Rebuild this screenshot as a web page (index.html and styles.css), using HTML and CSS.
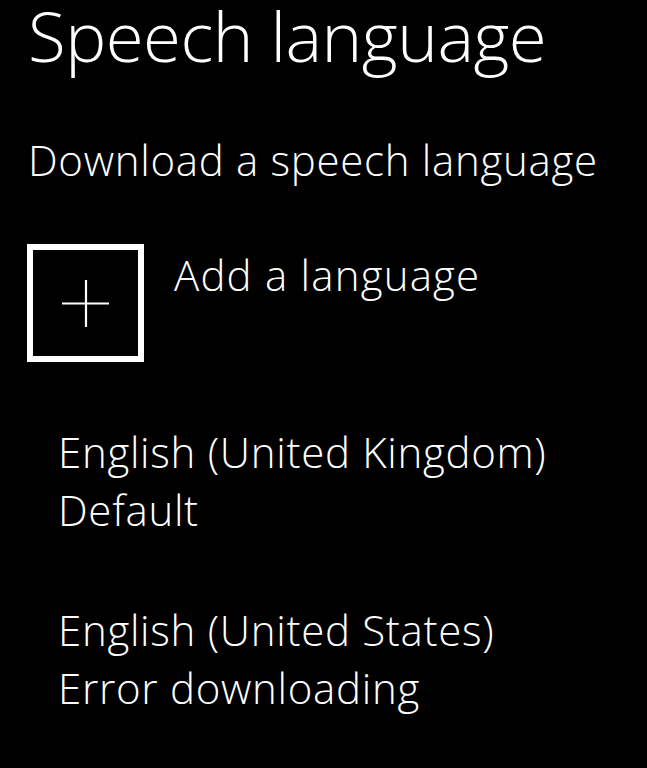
FILE: index.html
```html
<!DOCTYPE html>
<html lang="en">
<head>
<meta charset="utf-8">
<title>Speech language</title>
<link rel="stylesheet" href="styles.css">
</head>
<body>
<main class="page">
  <h1 class="title">Speech language</h1>
  <h2 class="subheader">Download a speech language</h2>
  <div class="add-row">
    <div class="add-tile">
      <svg class="plus" width="48" height="48" viewBox="0 0 48 48" aria-hidden="true">
        <path d="M24 1V48M0 24.5H47" stroke="#fff" stroke-width="2.2" fill="none"/>
      </svg>
    </div>
    <div class="add-label">Add a language</div>
  </div>
  <ul class="lang-list">
    <li class="lang-item">
      <div class="lang-name">English (United Kingdom)</div>
      <div class="lang-status">Default</div>
    </li>
    <li class="lang-item">
      <div class="lang-name">English (United States)</div>
      <div class="lang-status">Error downloading</div>
    </li>
  </ul>
</main>
</body>
</html>
```

FILE: styles.css
```css
html, body {
  margin: 0;
  padding: 0;
  background: #000;
}

body {
  width: 647px;
  height: 768px;
  overflow: hidden;
  color: #fff;
  font-family: "Open Sans", "Noto Sans", "DejaVu Sans", sans-serif;
}

.page {
  display: flex;
  flex-direction: column;
  padding-top: 1px;
}

.title {
  margin: 0 0 0 28px;
  font-size: 69px;
  font-weight: 300;
  line-height: 69px;
  letter-spacing: -0.5px;
}

.subheader {
  margin: 66px 0 0 28px;
  font-size: 42px;
  font-weight: 350;
  line-height: 48px;
  letter-spacing: 0.7px;
}

.add-row {
  display: flex;
  align-items: flex-start;
  gap: 30px;
  margin: 60px 0 0 27px;
}

.add-tile {
  box-sizing: border-box;
  width: 117px;
  height: 118px;
  border: 6px solid #fff;
  display: flex;
  align-items: center;
  justify-content: center;
}

.add-label {
  padding-top: 7px;
  font-size: 42px;
  font-weight: 350;
  line-height: 48px;
  letter-spacing: 1.2px;
}

.lang-list {
  list-style: none;
  margin: 61px 0 0 58px;
  padding: 0;
  display: flex;
  flex-direction: column;
  gap: 62px;
}

.lang-item {
  font-size: 42px;
  font-weight: 350;
  line-height: 58px;
  letter-spacing: 0.7px;
}
```
